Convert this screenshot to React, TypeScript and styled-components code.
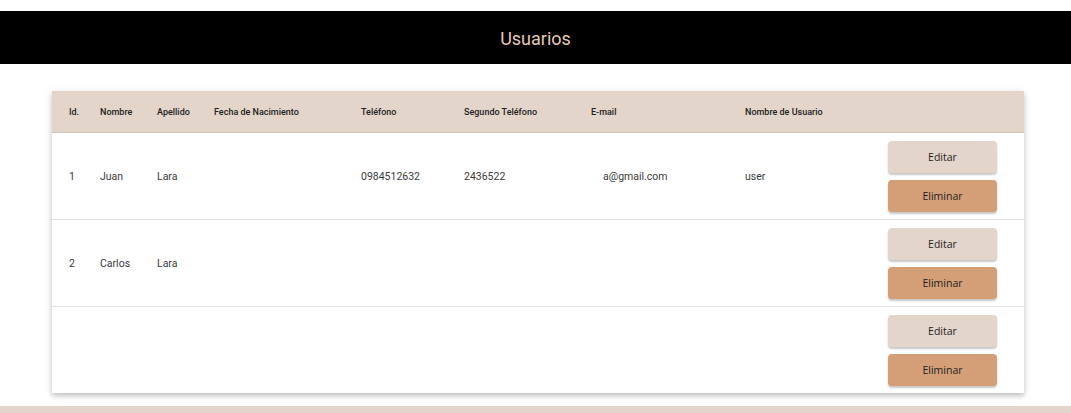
import styled, { createGlobalStyle } from "styled-components";

const GlobalStyle = createGlobalStyle`
  html, body {
    margin: 0;
    padding: 0;
    background: #ffffff;
    font-family: Roboto, "Liberation Sans", sans-serif;
  }
`;

const Page = styled.div`
  width: 1071px;
  height: 413px;
  overflow: hidden;
  display: flex;
  flex-direction: column;
`;

const TopBar = styled.header`
  margin-top: 11px;
  height: 53px;
  flex-shrink: 0;
  background: #000000;
  display: flex;
  align-items: center;
  justify-content: center;
`;

const Title = styled.h1`
  margin: 1px 0 0;
  font-family: Roboto, "Liberation Sans", sans-serif;
  font-weight: 400;
  font-size: 18px;
  color: #e6c8b6;
`;

const Card = styled.div`
  margin: 27px 0 0 52px;
  width: 972px;
  flex-shrink: 0;
  background: #ffffff;
  box-shadow: 0 3px 5px rgba(0, 0, 0, 0.2), 0 1px 10px rgba(0, 0, 0, 0.08);
`;

const Table = styled.table`
  width: 100%;
  border-collapse: collapse;
  table-layout: fixed;
`;

const HeadRow = styled.tr`
  background: #e3d5ca;
  height: 41px;
  border-bottom: 1px solid #cfc3ba;
`;

const Th = styled.th<{ $first?: boolean }>`
  text-align: left;
  padding: 0 0 0 ${(p) => (p.$first ? "17px" : "0")};
  height: 41px;
  font-size: 9px;
  font-weight: 500;
  color: #222222;
  white-space: nowrap;
`;

const Row = styled.tr<{ $last?: boolean }>`
  border-bottom: ${(p) => (p.$last ? "none" : "1px solid #e0e0e0")};
`;

const Td = styled.td<{ $first?: boolean; $indent?: number }>`
  padding: 0 0 0 ${(p) => (p.$first ? 17 : p.$indent ?? 0)}px;
  font-size: 10.5px;
  color: #3a3a3a;
  white-space: nowrap;
  vertical-align: middle;
`;

const Actions = styled.div`
  display: flex;
  flex-direction: column;
  gap: 7px;
  padding: 8px 0 7px;
`;

const ActionButton = styled.button<{ $danger?: boolean }>`
  width: 109px;
  height: 32px;
  border: none;
  border-radius: 4px;
  background: ${(p) => (p.$danger ? "#d49e77" : "#e3d5ca")};
  box-shadow: 0 2px 2px rgba(0, 0, 0, 0.22);
  font-family: "Open Sans", "Noto Sans", sans-serif;
  font-size: 10.5px;
  color: #1e1e1e;
  cursor: pointer;
`;

const Footer = styled.div`
  margin-top: 13px;
  height: 7px;
  flex-shrink: 0;
  background: #e3d5ca;
`;

const columns = [
  { label: "Id.", width: 48 },
  { label: "Nombre", width: 57 },
  { label: "Apellido", width: 57 },
  { label: "Fecha de Nacimiento", width: 147 },
  { label: "Teléfono", width: 103 },
  { label: "Segundo Teléfono", width: 127 },
  { label: "E-mail", width: 154 },
  { label: "Nombre de Usuario", width: 143 },
  { label: "", width: 136 },
];

const users = [
  { id: "1", nombre: "Juan", apellido: "Lara", fecha: "", telefono: "0984512632", segundo: "2436522", email: "a@gmail.com", usuario: "user" },
  { id: "2", nombre: "Carlos", apellido: "Lara", fecha: "", telefono: "", segundo: "", email: "", usuario: "" },
  { id: "", nombre: "", apellido: "", fecha: "", telefono: "", segundo: "", email: "", usuario: "" },
];

export default function App() {
  return (
    <Page>
      <GlobalStyle />
      <TopBar>
        <Title>Usuarios</Title>
      </TopBar>

      <Card>
        <Table>
          <colgroup>
            {columns.map((c, i) => (
              <col key={i} style={{ width: c.width }} />
            ))}
          </colgroup>
          <thead>
            <HeadRow>
              {columns.map((c, i) => (
                <Th key={i} $first={i === 0}>
                  {c.label}
                </Th>
              ))}
            </HeadRow>
          </thead>
          <tbody>
            {users.map((u, i) => (
              <Row key={i} $last={i === users.length - 1}>
                <Td $first>{u.id}</Td>
                <Td>{u.nombre}</Td>
                <Td>{u.apellido}</Td>
                <Td>{u.fecha}</Td>
                <Td>{u.telefono}</Td>
                <Td>{u.segundo}</Td>
                <Td $indent={12}>{u.email}</Td>
                <Td>{u.usuario}</Td>
                <Td>
                  <Actions>
                    <ActionButton>Editar</ActionButton>
                    <ActionButton $danger>Eliminar</ActionButton>
                  </Actions>
                </Td>
              </Row>
            ))}
          </tbody>
        </Table>
      </Card>

      <Footer />
    </Page>
  );
}
